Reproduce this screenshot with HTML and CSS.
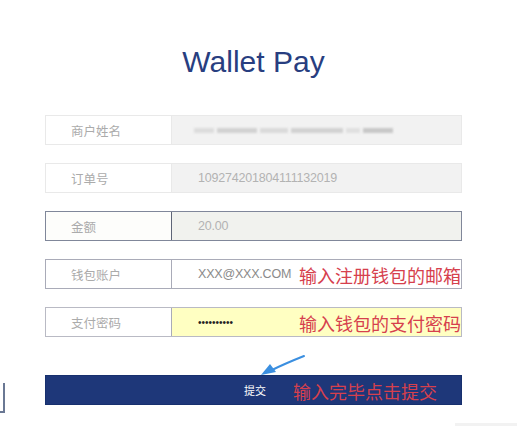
FILE: index.html
```html
<!DOCTYPE html>
<html lang="zh">
<head>
<meta charset="utf-8">
<title>Wallet Pay</title>
<link rel="stylesheet" href="styles.css">
</head>
<body>
<div class="page">
  <h1 class="title">Wallet Pay</h1>
  <div class="form">
    <div class="row row-light">
      <div class="label">商户姓名</div>
      <div class="field field-gray">
        <div class="blurred">
          <span class="b b1"></span><span class="b b2"></span><span class="b b3"></span><span class="b b4"></span><span class="b b5"></span><span class="b b6"></span>
        </div>
      </div>
    </div>
    <div class="row row-light">
      <div class="label">订单号</div>
      <div class="field field-gray"><span class="value">109274201804111132019</span></div>
    </div>
    <div class="row row-dark">
      <div class="label">金额</div>
      <div class="field field-gray2"><span class="value">20.00</span></div>
    </div>
    <div class="row row-mid">
      <div class="label">钱包账户</div>
      <div class="field field-white">
        <span class="value value-dark">XXX@XXX.COM</span>
        <span class="note">输入注册钱包的邮箱</span>
      </div>
    </div>
    <div class="row row-pw">
      <div class="label">支付密码</div>
      <div class="field field-yellow">
        <span class="dots">••••••••••</span>
        <span class="note">输入钱包的支付密码</span>
      </div>
    </div>
    <div class="submit">
      <span class="submit-text">提交</span>
      <span class="note note-btn">输入完毕点击提交</span>
      <svg class="arrow" width="56" height="26" viewBox="0 0 56 26">
        <path d="M48 2 C38 6 26 11 16 16" stroke="#3b8fe0" stroke-width="2" fill="none" stroke-linecap="round"/>
        <path d="M5 21 L14 10 L20 18 Z" fill="#3b8fe0"/>
      </svg>
    </div>
  </div>
</div>
<div class="bracket"></div>
<div class="corner-line"></div>
</body>
</html>
```

FILE: styles.css
```css
html, body {
  margin: 0;
  padding: 0;
  background: #ffffff;
}
body {
  font-family: "Liberation Sans", Arial, "Noto Sans CJK SC", sans-serif;
  width: 517px;
  height: 426px;
  overflow: hidden;
  position: relative;
}
.page {
  padding-left: 45px;
  width: 417px;
}
.title {
  margin: 0;
  padding-top: 45px;
  height: 115px;
  box-sizing: border-box;
  text-align: center;
  font-weight: normal;
  font-size: 30px;
  line-height: 34px;
  color: #283e80;
  font-family: "Liberation Sans", Arial, sans-serif;
}
.form {
  display: flex;
  flex-direction: column;
  gap: 18px;
}
.row {
  display: flex;
  height: 30px;
  box-sizing: border-box;
  border: 1px solid #e9e9e9;
}
.row-dark { border-color: #80879a; }
.row-mid { border-color: #a9abb8; }
.row-pw { border-color: #b9bac4; }
.label {
  width: 126px;
  box-sizing: border-box;
  border-right: 1px solid #e9e9e9;
  background: #ffffff;
  color: #ababab;
  font-size: 12.5px;
  padding-left: 25px;
  display: flex;
  align-items: center;
  font-family: "Noto Sans CJK SC", sans-serif;
}
.row-dark .label { border-right-color: #5e6577; background: #fdfdfb; }
.row-mid .label, .row-pw .label { border-right-color: #a9abb8; }
.field {
  flex: 1;
  display: flex;
  align-items: center;
  justify-content: space-between;
  padding-left: 26px;
  font-size: 12px;
}
.field-gray { background: #f2f2f2; }
.field-gray2 { background: #f1f2ee; }
.field-white { background: #ffffff; }
.field-yellow { background: #ffffc2; padding-left: 26px; }
.value {
  color: #b3b3b3;
  font-size: 12.5px;
  letter-spacing: -0.2px;
}
.value-dark { color: #8a8a8a; }
.dots {
  color: #222;
  font-size: 10px;
  letter-spacing: 0;
  font-family: "Liberation Sans", Arial, sans-serif;
}
.blurred {
  display: flex;
  gap: 3px;
  filter: blur(1px);
  margin-left: -4px;
}
.b { display: block; height: 5px; background: #d2d2d2; }
.b1 { width: 20px; background: #dcdcdc; }
.b2 { width: 40px; }
.b3 { width: 28px; background: #dadada; }
.b4 { width: 52px; }
.b5 { width: 14px; background: #e0e0e0; }
.b6 { width: 30px; background: #c8c8c8; }
.note {
  color: #d6404d;
  font-size: 18px;
  line-height: 20px;
  margin-top: 1px;
  font-family: "Noto Sans CJK SC", sans-serif;
  white-space: nowrap;
}
.submit {
  position: relative;
  margin-top: 20px;
  height: 30px;
  background: #1e3779;
  border: 1px solid #17306e;
  box-sizing: border-box;
  display: flex;
  align-items: center;
  padding-left: 198px;
}
.submit-text {
  color: #ffffff;
  font-size: 11px;
  font-family: "Noto Sans CJK SC", sans-serif;
}
.note-btn {
  margin-left: 27px;
}
.arrow {
  position: absolute;
  left: 210px;
  top: -22px;
}
.bracket {
  position: absolute;
  left: -2px;
  top: 383px;
  width: 5px;
  height: 28px;
  border-right: 2px solid #6a7894;
  border-bottom: 2px solid #6a7894;
}
.corner-line {
  position: absolute;
  left: 455px;
  top: 423px;
  width: 62px;
  height: 3px;
  background: #f2f2f2;
}
```
